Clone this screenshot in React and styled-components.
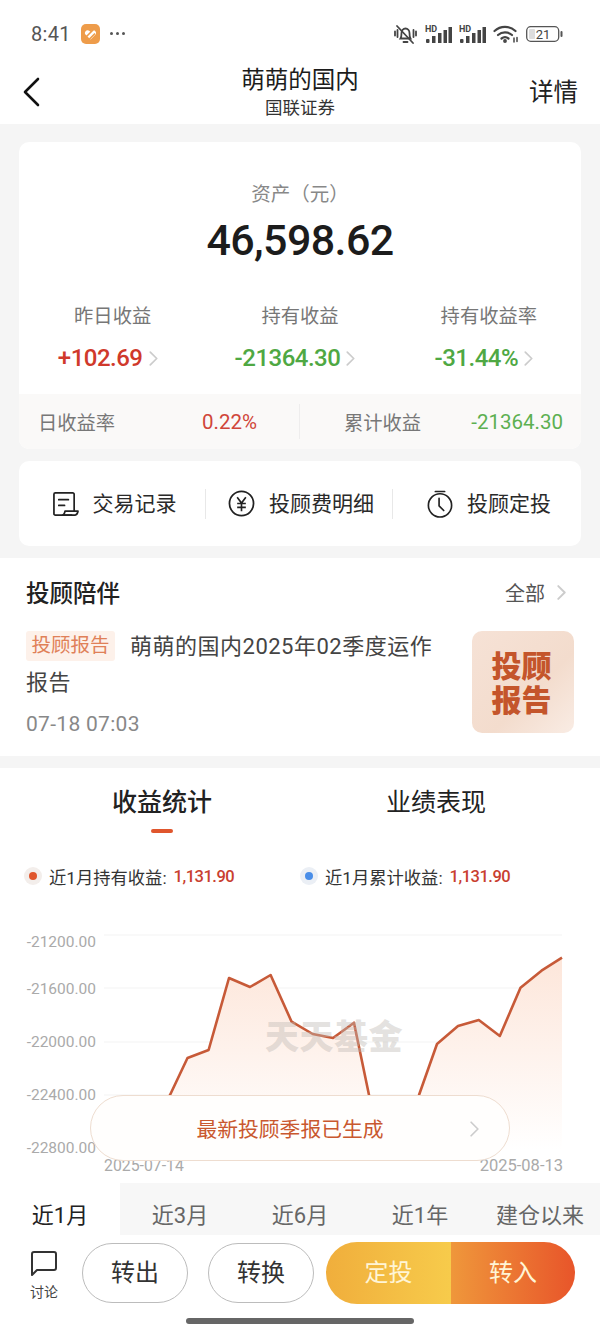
import styled, { createGlobalStyle } from "styled-components";

const sans = `Roboto, "Noto Sans CJK SC", sans-serif`;

const Global = createGlobalStyle`
  html, body { margin: 0; padding: 0; background: #f5f5f5; }
  body { font-family: ${sans}; }
  * { box-sizing: border-box; }
`;

const Page = styled.div`
  width: 600px;
  height: 1335px;
  overflow: hidden;
  display: flex;
  flex-direction: column;
  background: #f5f5f5;
`;

/* top of the page */
const StatusBar = styled.div`
  height: 60px;
  background: #fff;
  display: flex;
  align-items: center;
  padding: 7px 37px 0 31px;
  flex-shrink: 0;
`;
const Clock = styled.span`
  font-size: 20px;
  color: #555;
  letter-spacing: 0.3px;
`;
const AppBadge = styled.svg`
  margin-left: 10px;
`;
const More = styled.span`
  margin-left: 10px;
  display: flex;
  gap: 3px;
  i {
    width: 3px;
    height: 3px;
    border-radius: 50%;
    background: #555;
  }
`;
const StatusIcons = styled.div`
  margin-left: auto;
  display: flex;
  align-items: center;
  gap: 7px;
`;

const Header = styled.div`
  height: 64px;
  background: #fff;
  display: grid;
  grid-template-columns: 1fr auto 1fr;
  align-items: center;
  padding: 0 22px;
  flex-shrink: 0;
`;
const BackIcon = styled.svg`
  display: block;
`;
const TitleBox = styled.div`
  text-align: center;
  margin-top: -2px;
`;
const Title = styled.div`
  font-size: 23.5px;
  line-height: 34px;
  color: #1c1c1c;
`;
const SubTitle = styled.div`
  font-size: 17.5px;
  line-height: 22px;
  color: #333;
`;
const HeaderLink = styled.div`
  justify-self: end;
  font-size: 24.5px;
  color: #222;
  margin-top: -4px;
`;

/* asset card */
const Card = styled.div`
  margin: ${(p) => p.$top}px 19px 0;
  background: #fff;
  border-radius: 10px;
  overflow: hidden;
  flex-shrink: 0;
`;
const AssetTop = styled.div`
  height: 252px;
  padding-top: 38px;
  text-align: center;
`;
const AssetLabel = styled.div`
  font-size: 19.5px;
  line-height: 30px;
  color: #888;
`;
const AssetValue = styled.div`
  font-size: 43px;
  line-height: 60px;
  font-weight: 500;
  letter-spacing: -0.6px;
  color: #1c1c1c;
`;
const StatGrid = styled.div`
  margin-top: 32px;
  display: grid;
  grid-template-columns: repeat(3, 1fr);
  > div:last-child {
    padding-left: 3px;
  }
`;
const StatLabel = styled.div`
  font-size: 19.3px;
  line-height: 30px;
  color: #777;
`;
const StatValue = styled.div`
  margin-top: 11px;
  height: 30px;
  padding-right: 10px;
  display: flex;
  align-items: center;
  justify-content: center;
  gap: 6px;
  font-size: 24px;
  font-weight: 500;
  letter-spacing: -0.5px;
  color: ${(p) => p.$color};
`;
const Chevron = styled.svg`
  display: block;
  flex-shrink: 0;
`;
const SubRow = styled.div`
  height: 55px;
  background: #faf9f8;
  display: grid;
  grid-template-columns: 280px 1fr;
  align-items: center;
`;
const SubCell = styled.div`
  height: 35px;
  display: flex;
  align-items: center;
  justify-content: space-between;
  padding: ${(p) => (p.$second ? "0 18px 0 44px" : "0 42px 0 19px")};
  border-left: ${(p) => (p.$second ? "1px solid #eeeded" : "none")};
`;
const SubLabel = styled.span`
  font-size: 19.3px;
  color: #777;
`;
const SubValue = styled.span`
  font-size: 20.5px;
  color: ${(p) => p.$color};
`;

/* shortcuts */
const ShortcutRow = styled.div`
  height: 85px;
  display: grid;
  grid-template-columns: 186px 187px 1fr;
  align-items: center;
`;
const Shortcut = styled.div`
  height: 30px;
  padding-left: 4px;
  display: flex;
  align-items: center;
  justify-content: center;
  gap: 14px;
  font-size: 21px;
  color: #2a2a2a;
  border-left: ${(p) => (p.$first ? "none" : "1px solid #e8e8e8")};
  span {
    margin-top: -3px;
  }
`;

/* adviser reports */
const Section = styled.div`
  margin-top: 12px;
  background: #fff;
  flex-shrink: 0;
`;
const Companion = styled(Section)`
  height: 198px;
  padding: 17px 26px 0;
`;
const SectionHead = styled.div`
  display: flex;
  align-items: center;
  justify-content: space-between;
  height: 34px;
`;
const SectionTitle = styled.div`
  font-size: 23.5px;
  font-weight: 500;
  color: #222;
`;
const AllLink = styled.div`
  display: flex;
  align-items: center;
  gap: 12px;
  font-size: 20px;
  color: #555;
  padding-right: 8px;
`;
const ReportRow = styled.div`
  margin-top: 20px;
  display: flex;
  justify-content: space-between;
`;
const ReportText = styled.div`
  width: 425px;
  font-size: 22px;
  line-height: 36px;
  letter-spacing: 0.5px;
  color: #444;
`;
const Tag = styled.span`
  display: inline-block;
  height: 30px;
  line-height: 30px;
  padding: 0 5.5px;
  margin-right: 15px;
  border-radius: 3px;
  font-size: 19.5px;
  letter-spacing: 0;
  background: #fdf1ea;
  color: #e08058;
  vertical-align: 2px;
`;
const ReportTime = styled.div`
  margin-top: 8px;
  font-size: 21px;
  line-height: 30px;
  letter-spacing: 0.3px;
  color: #888;
`;
const ReportThumb = styled.div`
  width: 102px;
  height: 102px;
  margin-top: 2px;
  padding: 4px 3px 0 0;
  border-radius: 10px;
  background: linear-gradient(135deg, #f6e2d6 0%, #f3dccd 60%, #f9ece4 100%);
  display: flex;
  align-items: center;
  justify-content: center;
  text-align: center;
  font-size: 30px;
  line-height: 34px;
  font-weight: 900;
  color: #c4552b;
`;

/* earnings chart */
const ChartSection = styled(Section)`
  flex: 1;
`;
const TabRow = styled.div`
  height: 63px;
  padding-left: 25px;
  display: grid;
  grid-template-columns: 274px 274px;
`;
const Tab = styled.div`
  position: relative;
  text-align: center;
  font-size: 25px;
  line-height: 70px;
  font-weight: ${(p) => (p.$active ? 500 : 400)};
  color: #222;
  &::after {
    content: "";
    display: ${(p) => (p.$active ? "block" : "none")};
    position: absolute;
    left: 50%;
    bottom: 5px;
    width: 22px;
    height: 4px;
    margin-left: -11px;
    border-radius: 2px;
    background: #e0562d;
  }
`;
const LegendRow = styled.div`
  margin-top: 30px;
  padding-left: 24px;
  height: 30px;
  display: grid;
  grid-template-columns: 276px 1fr;
`;
const LegendItem = styled.div`
  display: flex;
  align-items: center;
`;
const LegendDot = styled.span`
  width: 18px;
  height: 18px;
  border-radius: 50%;
  background: ${(p) => p.$halo};
  display: flex;
  align-items: center;
  justify-content: center;
  margin-right: 7px;
  &::after {
    content: "";
    width: 8px;
    height: 8px;
    border-radius: 50%;
    background: ${(p) => p.$color};
  }
`;
const LegendText = styled.span`
  font-size: 17.3px;
  color: #333;
`;
const LegendValue = styled.span`
  margin-left: 7px;
  font-size: 16.5px;
  font-weight: 500;
  letter-spacing: -0.5px;
  color: #c9402f;
`;
const ChartWrap = styled.div`
  position: relative;
  height: 263px;
  margin-top: 29px;
`;
const ChartSvg = styled.svg`
  display: block;
`;
const Watermark = styled.div`
  position: absolute;
  left: 265px;
  top: 97px;
  font-size: 34px;
  line-height: 40px;
  font-weight: 900;
  letter-spacing: 0.5px;
  color: rgba(190, 185, 180, 0.42);
`;
const NoticePill = styled.div`
  position: absolute;
  left: 90px;
  top: 175px;
  width: 420px;
  height: 66px;
  border-radius: 33px;
  border: 1px solid #eeddd0;
  background: #fffefd;
  display: flex;
  align-items: center;
  justify-content: center;
  font-size: 20.8px;
  color: #c9582f;
  padding-right: 20px;
`;
const NoticeArrow = styled.svg`
  position: absolute;
  right: 30px;
  top: 25px;
`;

const RangeRow = styled.div`
  height: 52px;
  display: grid;
  grid-template-columns: repeat(5, 120px);
`;
const RangeItem = styled.div`
  height: 52px;
  padding-top: 20px;
  background: ${(p) => (p.$active ? "#fff" : "#f7f7f7")};
  color: ${(p) => (p.$active ? "#222" : "#666")};
  font-size: 22px;
  line-height: 26px;
  text-align: center;
`;

/* bottom actions */
const ActionBar = styled.div`
  height: 68px;
  padding: 7px 0 0 26px;
  display: flex;
  align-items: flex-start;
  background: #fff;
`;
const Discuss = styled.div`
  width: 36px;
  margin-right: 20px;
  padding-top: 8px;
  display: flex;
  flex-direction: column;
  align-items: center;
  font-size: 14px;
  line-height: 18px;
  color: #444;
  gap: 6px;
`;
const GhostButton = styled.div`
  width: 106px;
  height: 60px;
  margin: 1px 20px 0 0;
  padding-bottom: 5px;
  border: 1px solid #bcbcbc;
  border-radius: 30px;
  display: flex;
  align-items: center;
  justify-content: center;
  font-size: 24px;
  color: #333;
`;
const CtaGroup = styled.div`
  margin-left: -8px;
  width: 249px;
  height: 62px;
  border-radius: 31px;
  overflow: hidden;
  display: grid;
  grid-template-columns: 125px 124px;
`;
const CtaButton = styled.div`
  padding-bottom: 5px;
  display: flex;
  align-items: center;
  justify-content: center;
  font-size: 24px;
  color: #fff5d6;
  background: linear-gradient(90deg, ${(p) => p.$from}, ${(p) => p.$to});
`;
const HomeIndicator = styled.div`
  width: 228px;
  height: 6px;
  margin: 15px auto 0;
  border-radius: 3px;
  background: #666;
`;

const Arrow = ({ w = 8, h = 14, color = "#ccc", sw = 1.6 }) => (
  <Chevron width={w} height={h} viewBox="0 0 8 14" fill="none">
    <path d="M1 1l6 6-6 6" stroke={color} strokeWidth={sw} strokeLinecap="round" strokeLinejoin="round" />
  </Chevron>
);

const Signal = () => (
  <svg width="27" height="20" viewBox="0 0 27 20">
    <text x="0" y="8" fontSize="9" fontWeight="700" fill="#444" fontFamily="Roboto, sans-serif">HD</text>
    <rect x="1" y="15" width="3.5" height="4" rx="1" fill="#444" />
    <rect x="7" y="12" width="3.5" height="7" fill="#444" />
    <rect x="13" y="9" width="3.5" height="10" fill="#444" />
    <rect x="18.5" y="6" width="3.5" height="13" fill="#444" />
    <rect x="23.5" y="3" width="3.5" height="16" fill="#444" />
  </svg>
);

const points = [
  [104, 1140], [125, 1132], [146, 1125], [170, 1095], [187.5, 1058], [208.6, 1050],
  [229, 978], [250, 987], [270.6, 975], [291.6, 1021.7], [312.7, 1034], [333, 1038],
  [354, 1022.7], [369, 1095], [375, 1130], [396, 1140], [419, 1095], [437, 1044],
  [458, 1026], [478.8, 1020], [499.8, 1036], [520.5, 987.7], [541.5, 970.7], [562, 957.7],
];
const linePath = points.map((p) => p.join(",")).join(" ");
const areaPath = `104,1150 ${linePath} 562,1150`;
const yTicks = [
  ["-21200.00", 935, 947],
  ["-21600.00", 988, 994],
  ["-22000.00", 1042, 1047],
  ["-22400.00", 1095, 1100],
  ["-22800.00", 1149, 1153],
];

const stats = [
  { label: "昨日收益", value: "+102.69", color: "#d0392b" },
  { label: "持有收益", value: "-21364.30", color: "#4fa843" },
  { label: "持有收益率", value: "-31.44%", color: "#4fa843" },
];
const ranges = ["近1月", "近3月", "近6月", "近1年", "建仓以来"];

export default function App() {
  return (
    <Page>
      <Global />
      <StatusBar>
        <Clock>8:41</Clock>
        <AppBadge width="19" height="20" viewBox="0 0 19 20">
          <rect width="19" height="20" rx="5" fill="#ee9c4a" />
          <path d="M9.5 15.5L4.5 10.5c-2-2.5 1.5-6 4-3.5l1 1 1-1c2.5-2.5 6 1 4 3.5z" fill="#fff" />
          <path d="M5 13L13 5M8 15.5l6-6" stroke="#ee9c4a" strokeWidth="1.6" />
        </AppBadge>
        <More><i /><i /><i /></More>
        <StatusIcons>
          <svg width="25" height="24" viewBox="0 0 25 24" fill="none" stroke="#444" strokeWidth="1.8">
            <path d="M7.5 16.5c1-1.5 1-3 1-5.5 0-2.6 1.7-4.5 4-4.5s4 1.9 4 4.5c0 2.5 0 4 1 5.500z" />
            <path d="M10.5 20h4M4 4l16 17M2 9.5v4M4.5 8v7M20.5 8v7M23 9.5v4" strokeLinecap="round" />
          </svg>
          <Signal />
          <Signal />
          <svg width="26" height="18" viewBox="0 0 26 18" fill="none" stroke="#444" strokeWidth="2.2" strokeLinecap="round">
            <path d="M1.5 6c6-5.5 15-5.5 21 0M5 10c4-3.5 10-3.5 14 0M8.5 13.5c2-1.5 5-1.5 7 0" />
            <circle cx="12" cy="16" r="0.8" fill="#444" />
            <path d="M21 13v4M24 12.5v4" strokeWidth="1.5" />
          </svg>
          <svg width="37" height="16" viewBox="0 0 37 16">
            <rect x="0.7" y="0.7" width="32" height="14.6" rx="4" fill="none" stroke="#555" strokeWidth="1.3" />
            <rect x="3" y="3" width="6" height="10" rx="1" fill="#ddd" />
            <text x="17" y="12.5" fontSize="13" textAnchor="middle" fill="#444" fontFamily="Roboto, sans-serif">21</text>
            <rect x="34.5" y="5" width="2" height="6" rx="1" fill="#555" />
          </svg>
        </StatusIcons>
      </StatusBar>

      <Header>
        <BackIcon width="18" height="30" viewBox="0 0 18 30" fill="none">
          <path d="M16 2L3 15l13 13" stroke="#111" strokeWidth="2.6" strokeLinecap="round" strokeLinejoin="round" />
        </BackIcon>
        <TitleBox>
          <Title>萌萌的国内</Title>
          <SubTitle>国联证券</SubTitle>
        </TitleBox>
        <HeaderLink>详情</HeaderLink>
      </Header>

      <Card $top={18}>
        <AssetTop>
          <AssetLabel>资产（元）</AssetLabel>
          <AssetValue>46,598.62</AssetValue>
          <StatGrid>
            {stats.map((s) => (
              <div key={s.label}>
                <StatLabel>{s.label}</StatLabel>
                <StatValue $color={s.color}>
                  {s.value}
                  <Arrow w={9} h={15} />
                </StatValue>
              </div>
            ))}
          </StatGrid>
        </AssetTop>
        <SubRow>
          <SubCell>
            <SubLabel>日收益率</SubLabel>
            <SubValue $color="#d0463a">0.22%</SubValue>
          </SubCell>
          <SubCell $second>
            <SubLabel>累计收益</SubLabel>
            <SubValue $color="#5cb051">-21364.30</SubValue>
          </SubCell>
        </SubRow>
      </Card>

      <Card $top={12}>
        <ShortcutRow>
          <Shortcut $first>
            <svg width="27" height="26" viewBox="0 0 28 27" fill="none" stroke="#222" strokeWidth="1.8" strokeLinejoin="round">
              <path d="M23 21V3.5A1.5 1.5 0 0 0 21.5 2H3.5A1.5 1.5 0 0 0 2 3.5v20A1.5 1.5 0 0 0 3.5 25H21" />
              <path d="M11 25c1.5 0 2-1 2.5-4H27c-.5 3-1.5 4-3 4z" />
              <path d="M7 9h10M7 15h6" strokeLinecap="round" />
            </svg>
            <span>交易记录</span>
          </Shortcut>
          <Shortcut>
            <svg width="27" height="27" viewBox="0 0 28 28" fill="none" stroke="#222" strokeWidth="1.8">
              <circle cx="14" cy="14" r="12.5" />
              <path d="M9.5 7.5L14 13.5l4.500-6M9.5 14h9M9.5 18h9M14 13.5V22" strokeWidth="1.7" />
            </svg>
            <span>投顾费明细</span>
          </Shortcut>
          <Shortcut>
            <svg width="26" height="30" viewBox="0 0 28 30" fill="none" stroke="#222" strokeWidth="1.8">
              <path d="M9 1.5h10" strokeLinecap="round" />
              <circle cx="14" cy="16.5" r="12.5" />
              <path d="M13 9v8l5 5" strokeLinecap="round" strokeLinejoin="round" />
            </svg>
            <span>投顾定投</span>
          </Shortcut>
        </ShortcutRow>
      </Card>

      <Companion>
        <SectionHead>
          <SectionTitle>投顾陪伴</SectionTitle>
          <AllLink>
            全部
            <Arrow w={9} h={15} sw={1.8} />
          </AllLink>
        </SectionHead>
        <ReportRow>
          <div>
            <ReportText>
              <Tag>投顾报告</Tag>
              萌萌的国内2025年02季度运作报告
            </ReportText>
            <ReportTime>07-18 07:03</ReportTime>
          </div>
          <ReportThumb>
            投顾
            <br />
            报告
          </ReportThumb>
        </ReportRow>
      </Companion>

      <ChartSection>
        <TabRow>
          <Tab $active>收益统计</Tab>
          <Tab>业绩表现</Tab>
        </TabRow>
        <LegendRow>
          <LegendItem>
            <LegendDot $color="#e0562d" $halo="#f3eeeb" />
            <LegendText>近1月持有收益:</LegendText>
            <LegendValue>1,131.90</LegendValue>
          </LegendItem>
          <LegendItem>
            <LegendDot $color="#4a8ee8" $halo="#ebeff5" />
            <LegendText>近1月累计收益:</LegendText>
            <LegendValue>1,131.90</LegendValue>
          </LegendItem>
        </LegendRow>
        <ChartWrap>
          <ChartSvg width="600" height="263" viewBox="0 920 600 263">
            <defs>
              <linearGradient id="earnFill" x1="0" y1="0" x2="0" y2="1">
                <stop offset="0" stopColor="#fde6da" />
                <stop offset="1" stopColor="#ffffff" />
              </linearGradient>
            </defs>
            {yTicks.map(([label, y, ty]) => (
              <g key={label}>
                <line x1="104" x2="562" y1={y} y2={y} stroke="#f3f3f3" strokeWidth="1" />
                <text x="96" y={ty} fontSize="15.5" textAnchor="end" fill="#aaa" fontFamily="Roboto, sans-serif">{label}</text>
              </g>
            ))}
            <polygon points={areaPath} fill="url(#earnFill)" />
            <polyline points={linePath} fill="none" stroke="#c75a38" strokeWidth="2.6" strokeLinejoin="round" />
            <text x="104" y="1171" fontSize="15.8" fill="#aaa" fontFamily="Roboto, sans-serif">2025-07-14</text>
            <text x="563" y="1171" fontSize="16.5" textAnchor="end" fill="#aaa" fontFamily="Roboto, sans-serif">2025-08-13</text>
          </ChartSvg>
          <Watermark>天天基金</Watermark>
          <NoticePill>
            最新投顾季报已生成
            <NoticeArrow width="9" height="16" viewBox="0 0 8 14" fill="none">
              <path d="M1 1l6 6-6 6" stroke="#ccc" strokeWidth="1.5" strokeLinecap="round" strokeLinejoin="round" />
            </NoticeArrow>
          </NoticePill>
        </ChartWrap>
        <RangeRow>
          {ranges.map((r, i) => (
            <RangeItem key={r} $active={i === 0}>{r}</RangeItem>
          ))}
        </RangeRow>
        <ActionBar>
          <Discuss>
            <svg width="28" height="27" viewBox="0 0 28 27" fill="none" stroke="#333" strokeWidth="2" strokeLinejoin="round">
              <path d="M2 25V4a2 2 0 0 1 2-2h20a2 2 0 0 1 2 2v14a2 2 0 0 1-2 2H7z" />
            </svg>
            讨论
          </Discuss>
          <GhostButton>转出</GhostButton>
          <GhostButton>转换</GhostButton>
          <CtaGroup>
            <CtaButton $from="#f0ae3c" $to="#f7cb4b">定投</CtaButton>
            <CtaButton $from="#ef973b" $to="#e8552a">转入</CtaButton>
          </CtaGroup>
        </ActionBar>
        <HomeIndicator />
      </ChartSection>
    </Page>
  );
}
